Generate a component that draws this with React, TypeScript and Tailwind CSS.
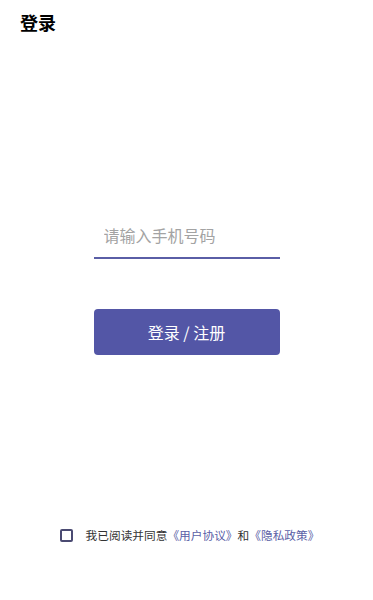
import { useState } from "react";

export default function App() {
  const [phone, setPhone] = useState("");
  const [agreed, setAgreed] = useState(false);

  return (
    <div
      className="flex min-h-[600px] w-full flex-col bg-white"
      style={{ fontFamily: '"Noto Sans CJK SC", "Noto Sans", sans-serif' }}
    >
      <header className="px-[20px] pt-[12px]">
        <h1 className="text-[18px] font-bold leading-[20px] text-black">登录</h1>
      </header>

      <main className="mx-auto mt-[184px] flex w-[186px] flex-col">
        <input
          type="tel"
          value={phone}
          onChange={(e) => setPhone(e.target.value)}
          placeholder="请输入手机号码"
          className="h-[43px] w-full border-b-2 border-[#5a5ea6] bg-transparent px-[10px] pb-[4px] text-[16px] text-gray-800 outline-none placeholder:text-[#a3a3a3]"
        />

        <button
          type="button"
          className="mt-[50px] h-[46px] w-full rounded-[4px] bg-[#5356a6] text-[16px] text-white"
        >
          登录 / 注册
        </button>
      </main>

      <footer className="mt-[172px] flex items-center justify-center gap-[13px] pl-[6px]">
        <button
          type="button"
          onClick={() => setAgreed((a) => !a)}
          aria-label="同意协议"
          className={`h-[13px] w-[13px] rounded-[2px] border-2 border-[#4a4a72] ${
            agreed ? "bg-[#5356a6]" : "bg-white"
          }`}
        />
        <p className="text-[11.7px] leading-[16px] text-[#333]">
          我已阅读并同意
          <span className="text-[#5a5ea6]">《用户协议》</span>和
          <span className="text-[#5a5ea6]">《隐私政策》</span>
        </p>
      </footer>
    </div>
  );
}
